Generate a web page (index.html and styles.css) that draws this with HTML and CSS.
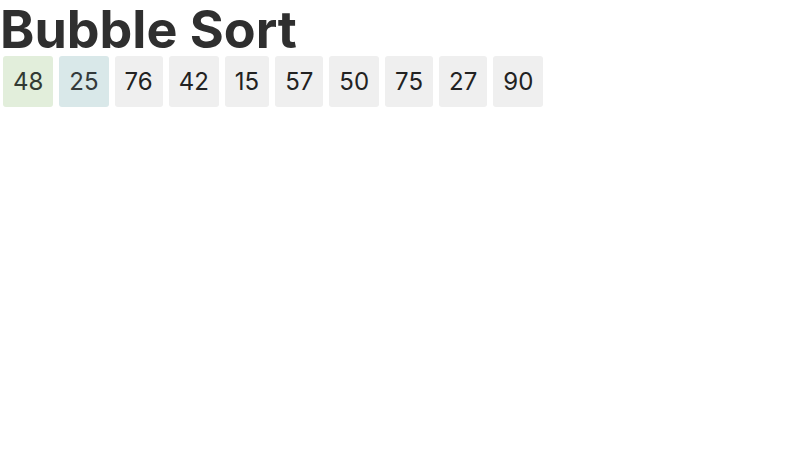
FILE: index.html
```html
<!DOCTYPE html>
<html>
<head>
<meta charset="utf-8">
<link rel="stylesheet" href="styles.css">
</head>
<body>
<h1 class="title">Bubble Sort</h1>
<div class="row">
  <span class="cell cell-compare">48</span>
  <span class="cell cell-current">25</span>
  <span class="cell">76</span>
  <span class="cell">42</span>
  <span class="cell">15</span>
  <span class="cell">57</span>
  <span class="cell">50</span>
  <span class="cell">75</span>
  <span class="cell">27</span>
  <span class="cell">90</span>
</div>
</body>
</html>
```
FILE: styles.css
```css
body {
  margin: 0;
  background: #ffffff;
  color: #333333;
  font-family: Inter, "Noto Sans", sans-serif;
}
.title {
  margin: -2px 0 -5px;
  font-size: 52px;
  line-height: 63px;
  font-weight: 700;
  color: #2f2f2f;
}
.row {
  display: flex;
  gap: 6px;
  padding: 0 3px;
}
.cell {
  display: block;
  padding: 10px 10px;
  font-size: 24px;
  line-height: 31px;
  background: #efefef;
  border-radius: 3px;
  color: #222222;
}
.cell-compare {
  background: #e2eedb;
  color: #333a33;
}
.cell-current {
  background: #d9e8e9;
  color: #333a3b;
}
```
